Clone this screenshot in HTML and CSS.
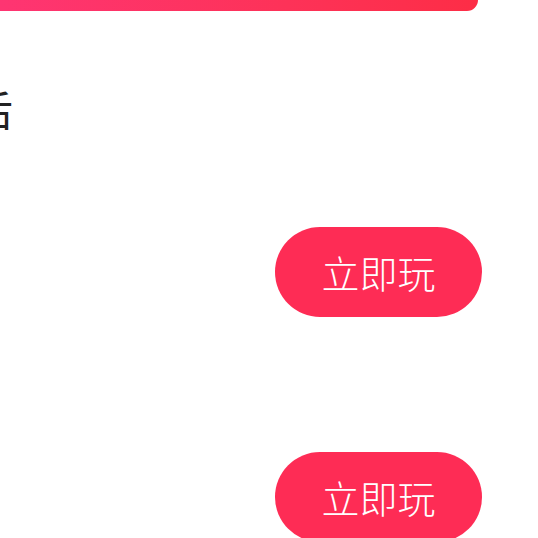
FILE: index.html
```html
<!DOCTYPE html>
<html lang="zh-CN">
  <head>
    <meta charset="UTF-8" />
    <meta name="viewport" content="width=device-width, initial-scale=1.0" />
    <title>立即玩</title>
    <link rel="stylesheet" href="styles.css">
  </head>
  <body>
    <div class="page">
      <div class="top-banner"></div>
      <div class="section-title">最后</div>
      <ul class="game-list">
        <li class="game-item">
          <button class="play-btn">立即玩</button>
        </li>
        <li class="game-item">
          <button class="play-btn">立即玩</button>
        </li>
      </ul>
    </div>
  </body>
</html>
```

FILE: styles.css
```css
body {
  margin: 0;
  background-color: #ffffff;
  font-family: "Noto Sans CJK SC", "Noto Sans", sans-serif;
  overflow: hidden;
}
.page {
  width: 538px;
  height: 538px;
  overflow: hidden;
  display: flex;
  flex-direction: column;
}
.top-banner {
  height: 11px;
  margin-right: 60px;
  border-radius: 0 0 28px 0;
  background: linear-gradient(90deg, #fe3572 0%, #fd3258 60%, #fd2d46 100%);
  flex-shrink: 0;
}
.section-title {
  box-sizing: border-box;
  height: 148px;
  padding-top: 46px;
  display: flex;
  align-items: center;
  margin-left: -69px;
  font-size: 41px;
  color: #222222;
  white-space: nowrap;
  flex-shrink: 0;
}
.game-list {
  list-style: none;
  margin: 0;
  padding: 0;
}
.game-item {
  height: 225px;
  display: flex;
  align-items: center;
  justify-content: flex-end;
  padding-right: 56px;
}
.play-btn {
  width: 207px;
  height: 90px;
  border: none;
  border-radius: 45px;
  background-color: #fe2c55;
  color: #ffffff;
  font-family: "Noto Sans CJK SC", sans-serif;
  font-size: 38px;
  font-weight: 300;
  padding: 0;
  cursor: pointer;
}
```
